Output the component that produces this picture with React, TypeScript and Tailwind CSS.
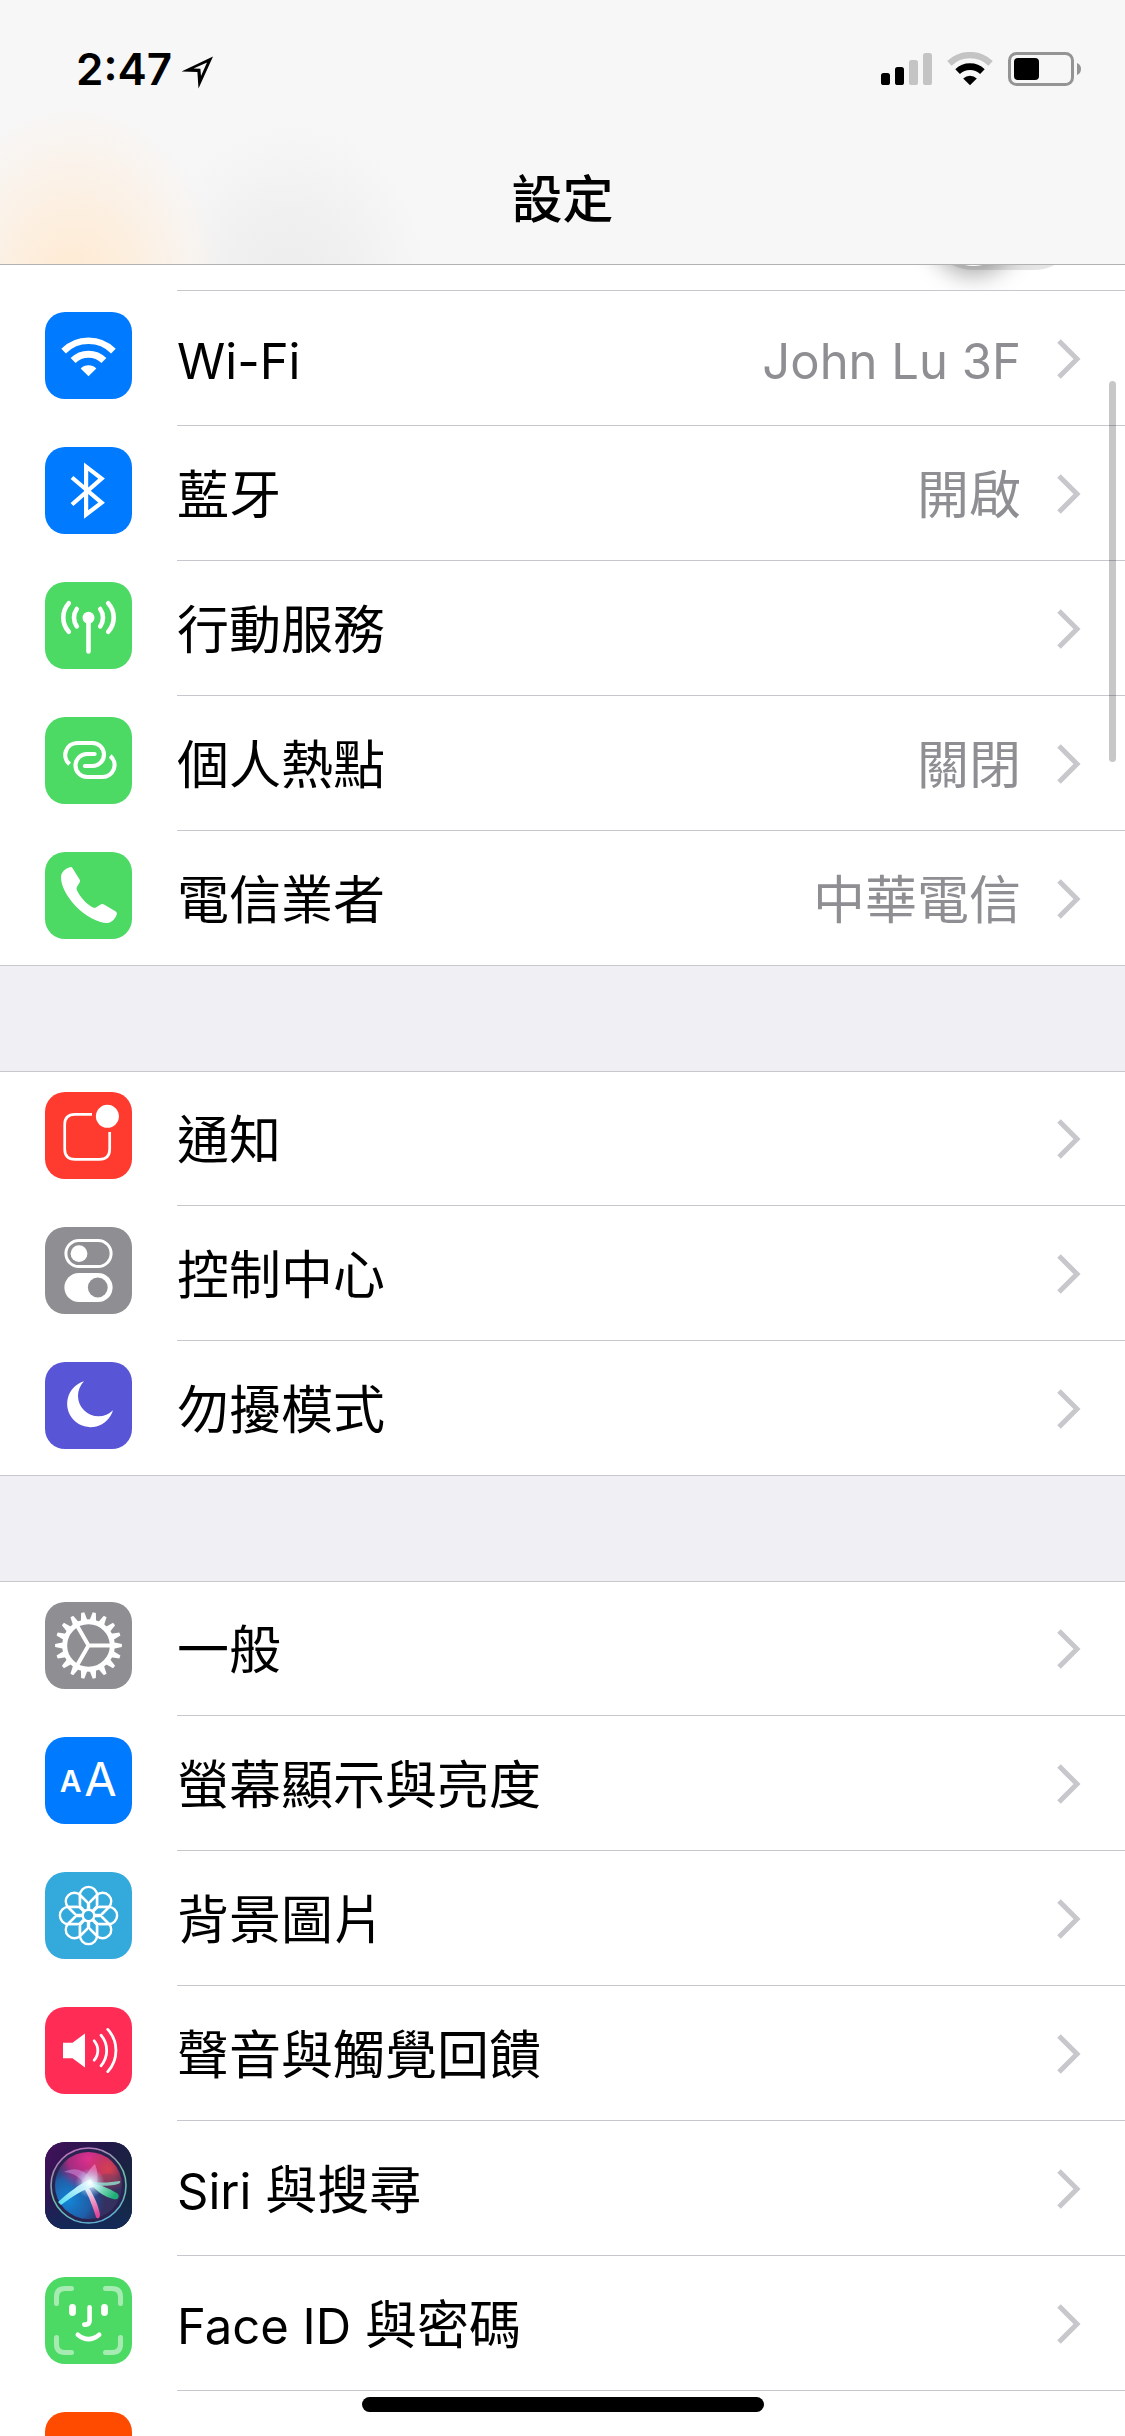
import type { ReactNode } from "react";

function Tile({ color, children }: { color: string; children?: ReactNode }) {
  return (
    <svg viewBox="0 0 87 87" className="size-[87px] rounded-[20px]" fill="none" aria-hidden="true">
      <rect width="87" height="87" fill={color} />
      {children}
    </svg>
  );
}

const WifiIcon = () => (
  <Tile color="#007aff">
    <path d="M18.6 39.1A35.2 35.2 0 0 1 68.4 39.1" stroke="#fff" strokeWidth="6.5" />
    <path d="M28.1 48.6A21.8 21.8 0 0 1 58.9 48.6" stroke="#fff" strokeWidth="7" />
    <path d="M43.5 64.3L35.7 56.4A11 11 0 0 1 51.3 56.4Z" fill="#fff" />
  </Tile>
);

const BluetoothIcon = () => (
  <Tile color="#007aff">
    <path d="M27 30.5L56.6 55.7L41.1 67.5V19.7L56.6 31.5L27 57.5" stroke="#fff" strokeWidth="4.2" />
  </Tile>
);

const CellularIcon = () => (
  <Tile color="#4cd964">
    <circle cx="43.5" cy="35.7" r="6" fill="#fff" />
    <g stroke="#fff" strokeWidth="4.6" strokeLinecap="round">
      <path d="M43.5 38V69.5" />
      <path d="M31.8 27A15 15 0 0 0 31.8 44.4M55.2 27A15 15 0 0 1 55.2 44.4" />
      <path d="M23.8 21.2A21.3 21.3 0 0 0 23.8 49.8M63.2 21.2A21.3 21.3 0 0 1 63.2 49.8" />
    </g>
  </Tile>
);

const HotspotIcon = () => (
  <Tile color="#4cd964">
    <g stroke="#fff" strokeWidth="4.2">
      <path d="M24.6 47.2A12 12 0 0 1 32 26H47.5A11.5 11.5 0 0 1 47.5 49H40" />
      <path d="M65.2 38.8A12 12 0 0 1 57.5 60H42A11.5 11.5 0 0 1 42 37H49.5" />
    </g>
    <path d="M40 49H39.9M49.5 37H49.6" stroke="#fff" strokeWidth="4.2" strokeLinecap="round" />
  </Tile>
);

const PhoneIcon = () => (
  <Tile color="#4cd964">
    <path
      d="M25 15.2Q26.6 14.6 27.6 16.2L34.6 27.4Q35.6 29 34.6 30.5L31.9 35Q31 36.5 31.9 38.2C35.5 45.5 41 51.5 47.5 55.2Q49.5 56.3 51.3 55.2L55.6 52.4Q57.3 51.4 59 52.4L70.8 59.4Q72.6 60.6 71.8 62.6C70 66.8 67.5 70 63 71C56 72 40 64.5 30.5 54C21.5 44 15.8 33.5 16 25C16.3 19.5 20.5 16.6 25 15.2Z"
      fill="#fff"
    />
  </Tile>
);

const NotificationsIcon = () => (
  <Tile color="#ff3b30">
    <path
      d="M47 22.3H30Q19.7 22.3 19.7 32.6V57Q19.7 67.3 30 67.3H54.4Q64.7 67.3 64.7 57V40"
      stroke="#fff"
      strokeWidth="2.7"
    />
    <circle cx="62.4" cy="24.3" r="11.5" fill="#fff" />
  </Tile>
);

const ControlCenterIcon = () => (
  <Tile color="#8e8e93">
    <rect x="20.9" y="13.5" width="45.2" height="26" rx="13" stroke="#fff" strokeWidth="3" />
    <circle cx="34" cy="26.6" r="8.4" fill="#fff" />
    <rect x="19.4" y="46" width="48.2" height="29" rx="14.5" fill="#fff" />
    <circle cx="52.8" cy="60.5" r="9.9" fill="#8e8e93" />
  </Tile>
);

const MoonIcon = () => (
  <Tile color="#5856d6">
    <path d="M39 19.3A20.5 20.5 0 0 0 68 48.3A23.4 23.4 0 1 1 39 19.3Z" fill="#fff" />
  </Tile>
);

const TEETH = Array.from({ length: 18 }, (_, i) => i * 20);
const GearIcon = () => (
  <Tile color="#8e8e93">
    <g transform="translate(43.5 43.5)">
      <circle r="23.8" stroke="#fff" strokeWidth="5" />
      {TEETH.map((a) => (
        <path key={a} d="M25 -3.3L33.4 -1.6V1.6L25 3.3Z" fill="#fff" transform={`rotate(${a})`} />
      ))}
      <path d="M0 0H23M0 0L-11.5 -19.9M0 0L-11.5 19.9" stroke="#fff" strokeWidth="4" />
    </g>
  </Tile>
);

const DisplayIcon = () => (
  <Tile color="#007aff">
    <g fill="#fff" fontFamily="Inter, sans-serif" textAnchor="middle">
      <text x="25.6" y="55" fontSize="30" fontWeight="600">
        A
      </text>
      <text x="55.5" y="59" fontSize="47">
        A
      </text>
    </g>
  </Tile>
);

const PETALS = [0, 45, 90, 135, 180, 225, 270, 315];
const WallpaperIcon = () => (
  <Tile color="#34aadc">
    <g transform="translate(43.5 43.5)" stroke="#fff" strokeWidth="2.4">
      {PETALS.map((a) => (
        <g key={a} transform={`rotate(${a})`}>
          <path d="M-8 -20L0 -12L8 -20M-8.6 -10.5V-20A8.6 8.6 0 0 1 8.6 -20V-10.5" />
          <path d="M0 -5.5V-12" strokeWidth="3.4" />
        </g>
      ))}
      <circle r="5.8" />
    </g>
  </Tile>
);

const SoundIcon = () => (
  <Tile color="#ff2d55">
    <path d="M18 35.7H27.5L40 26.6V60.4L27.5 51.3H18Z" fill="#fff" />
    <g stroke="#fff" strokeWidth="2.8" strokeLinecap="round">
      <path d="M49.2 33.8A14.8 14.8 0 0 1 49.2 53.2" />
      <path d="M56 28.2A23.5 23.5 0 0 1 56 58.8" />
      <path d="M62.8 22.4A31.4 31.4 0 0 1 62.8 64.6" />
    </g>
  </Tile>
);

const SiriIcon = () => (
  <Tile color="#1b1d44">
    <defs>
      <linearGradient id="siri-bg" x1="0" y1="0" x2="1" y2="0.6">
        <stop offset="0" stopColor="#45105c" />
        <stop offset="0.5" stopColor="#23184a" />
        <stop offset="1" stopColor="#15283d" />
      </linearGradient>
      <linearGradient id="siri-base" x1="0" y1="0" x2="0" y2="1">
        <stop offset="0.6" stopColor="#182a60" stopOpacity="0" />
        <stop offset="1" stopColor="#132a58" />
      </linearGradient>
      <radialGradient id="siri-pink" cx="0.5" cy="0.1" r="0.5">
        <stop offset="0" stopColor="#e0308f" />
        <stop offset="0.6" stopColor="#c02a86" stopOpacity="0.8" />
        <stop offset="1" stopColor="#a02a86" stopOpacity="0" />
      </radialGradient>
      <radialGradient id="siri-red" cx="0.8" cy="0.25" r="0.35">
        <stop offset="0" stopColor="#d8404f" />
        <stop offset="1" stopColor="#d8404f" stopOpacity="0" />
      </radialGradient>
      <radialGradient id="siri-blue" cx="0.2" cy="0.72" r="0.55">
        <stop offset="0" stopColor="#1287d8" />
        <stop offset="0.6" stopColor="#1c66b4" stopOpacity="0.85" />
        <stop offset="1" stopColor="#1c4fa4" stopOpacity="0" />
      </radialGradient>
      <radialGradient id="siri-glow">
        <stop offset="0" stopColor="#fff" />
        <stop offset="0.35" stopColor="#d9f6ff" stopOpacity="0.7" />
        <stop offset="1" stopColor="#a9d8ff" stopOpacity="0" />
      </radialGradient>
      <linearGradient id="siri-ring" x1="0.3" y1="0" x2="0.7" y2="1">
        <stop offset="0" stopColor="#c070c0" />
        <stop offset="0.5" stopColor="#6cc0a0" />
        <stop offset="1" stopColor="#5fb0d8" />
      </linearGradient>
      <linearGradient id="siri-green" x1="0" y1="0" x2="1" y2="0.4">
        <stop offset="0" stopColor="#d6fff4" />
        <stop offset="1" stopColor="#1fae78" />
      </linearGradient>
      <linearGradient id="siri-stem" x1="0" y1="0" x2="0.2" y2="1">
        <stop offset="0" stopColor="#fff" />
        <stop offset="1" stopColor="#e0489c" />
      </linearGradient>
      <linearGradient id="siri-cyan" x1="1" y1="0" x2="0" y2="1">
        <stop offset="0" stopColor="#fff" />
        <stop offset="1" stopColor="#52dcf0" />
      </linearGradient>
    </defs>
    <rect width="87" height="87" fill="url(#siri-bg)" />
    <rect width="87" height="87" fill="url(#siri-base)" />
    <circle cx="43.5" cy="43.5" r="37.5" fill="#2a2350" stroke="url(#siri-ring)" strokeWidth="1.6" />
    <circle cx="43.5" cy="43.5" r="33.5" fill="#34305f" />
    <circle cx="43.5" cy="43.5" r="33.5" fill="url(#siri-blue)" />
    <circle cx="43.5" cy="43.5" r="33.5" fill="url(#siri-pink)" />
    <circle cx="43.5" cy="43.5" r="33.5" fill="url(#siri-red)" />
    <path d="M45 42C58 28 70 30 75 40C66 43 55 43 45 42Z" fill="#8a4060" fillOpacity="0.5" />
    <path d="M19 30C30 24 40 28 47 38L42 46C37 36 29 31 19 30Z" fill="#c79be8" fillOpacity="0.5" />
    <path d="M36 41C40 35 44 27 50 22C53 29 53 36 52 43Z" fill="#f08ac8" fillOpacity="0.65" />
    <path d="M46 39C55 42 66 40 75 39C77 42 70 44 48 44Z" fill="#8ff0d8" fillOpacity="0.75" />
    <path d="M46 41C56 43 68 48 73 52C75 56 72 58 68 57C60 55 53 50 46 43Z" fill="url(#siri-green)" />
    <path d="M42 44C47 49 53 62 55 72C55 76 53 78 51 75C48 66 44 54 39 46Z" fill="url(#siri-stem)" />
    <path d="M46 37C34 42 22 52 13 60L16 63C28 54 38 47 49 45Z" fill="url(#siri-cyan)" />
    <circle cx="45" cy="41" r="15" fill="url(#siri-glow)" />
  </Tile>
);

const FaceIdIcon = () => (
  <Tile color="#4cd964">
    <g stroke="#fff" strokeLinecap="round">
      <path
        d="M11.5 26.5V20Q11.5 11.5 20 11.5H26.5M60.5 11.5H67Q75.5 11.5 75.5 20V26.5M75.5 60.5V67Q75.5 75.5 67 75.5H60.5M26.5 75.5H20Q11.5 75.5 11.5 67V60.5"
        strokeOpacity="0.5"
        strokeWidth="5"
      />
      <path d="M27.5 30.5V35.5M59.5 30.5V35.5" strokeWidth="6.8" />
      <path d="M44.6 30.3V43.5Q44.6 47.6 40.5 47.6H39.3" strokeWidth="4.6" />
      <path d="M32.8 57.8Q43.5 66.6 54.2 57.8" strokeWidth="4.6" />
    </g>
  </Tile>
);

const SosIcon = () => <Tile color="#ff4b00" />;

type Item = { label: string; value?: string; icon: ReactNode };

const connectivity: Item[] = [
  { label: "Wi-Fi", value: "John Lu 3F", icon: <WifiIcon /> },
  { label: "藍牙", value: "開啟", icon: <BluetoothIcon /> },
  { label: "行動服務", icon: <CellularIcon /> },
  { label: "個人熱點", value: "關閉", icon: <HotspotIcon /> },
  { label: "電信業者", value: "中華電信", icon: <PhoneIcon /> },
];

const alerts: Item[] = [
  { label: "通知", icon: <NotificationsIcon /> },
  { label: "控制中心", icon: <ControlCenterIcon /> },
  { label: "勿擾模式", icon: <MoonIcon /> },
];

const device: Item[] = [
  { label: "一般", icon: <GearIcon /> },
  { label: "螢幕顯示與亮度", icon: <DisplayIcon /> },
  { label: "背景圖片", icon: <WallpaperIcon /> },
  { label: "聲音與觸覺回饋", icon: <SoundIcon /> },
  { label: "Siri 與搜尋", icon: <SiriIcon /> },
  { label: "Face ID 與密碼", icon: <FaceIdIcon /> },
];

/* Latin runs are set slightly smaller than the Chinese characters beside them. */
function Mixed({ text }: { text: string }) {
  const latin = text.match(/^[\x20-\x7e]*/)?.[0] ?? "";
  return (
    <>
      {latin && <span className="text-[49px] whitespace-pre">{latin}</span>}
      {text.slice(latin.length)}
    </>
  );
}

function Row({ item }: { item: Item }) {
  return (
    <li className="group">
      <a href="#" className="flex h-[135px] pl-[45px]">
        <span className="pt-[21px]">{item.icon}</span>
        <span className="ml-[45px] flex flex-1 items-center border-b border-[#c8c7cc] pr-[44px] group-last:border-transparent">
          <span className="flex-1 pt-1.5">
            <Mixed text={item.label} />
          </span>
          {item.value && (
            <span className="pt-1.5 text-[#8e8e93]">
              <Mixed text={item.value} />
            </span>
          )}
          <svg viewBox="0 0 24 40" className="mt-0.5 ml-[36px] h-10 w-6" fill="none" aria-hidden="true">
            <path d="M2 2L20 20L2 38" stroke="#c7c7cc" strokeWidth="5" />
          </svg>
        </span>
      </a>
    </li>
  );
}

function Group({ items }: { items: Item[] }) {
  return (
    <ul className="relative bg-white before:absolute before:inset-x-0 before:top-0 before:h-px before:bg-[#c8c7cc] after:absolute after:inset-x-0 after:bottom-0 after:h-px after:bg-[#c8c7cc]">
      {items.map((item) => (
        <Row key={item.label} item={item} />
      ))}
    </ul>
  );
}

function StatusBar() {
  return (
    <div className="flex h-[132px] items-start justify-between pt-[52px] pr-[43px] pl-[76px]">
      <div className="flex items-start gap-2.5">
        <time className="text-[44px] leading-[34px] font-semibold">2:47</time>
        <svg viewBox="0 0 32 34" className="mt-1 h-[34px] w-8" aria-label="定位">
          <path
            fillRule="evenodd"
            d="M31 0.5L16.5 32.5L15.4 16L-0.5 15.6ZM25 6.4L11.5 12.4L18.4 12.7L19 20Z"
          />
        </svg>
      </div>
      <div className="flex items-center gap-[15px]">
        <svg viewBox="0 0 51 34" className="h-[34px] w-[51px]" aria-label="訊號強度">
          <rect x="0" y="21" width="9" height="12" rx="2.6" />
          <rect x="14" y="15" width="9" height="18" rx="2.6" />
          <rect x="28" y="8" width="9" height="25" rx="2.6" fill="#c4c4c4" />
          <rect x="42" y="1" width="9" height="32" rx="2.6" fill="#c4c4c4" />
        </svg>
        <svg viewBox="0 0 46 34" className="h-[34px] w-[46px]" fill="none" aria-label="Wi-Fi">
          <path d="M2.4 11.3A30 30 0 0 1 43.6 11.3" stroke="#c4c4c4" strokeWidth="6.4" />
          <path d="M10.6 19.7A17.8 17.8 0 0 1 35.4 19.7" stroke="#000" strokeWidth="6.6" />
          <path d="M23 33.3L16.2 26.4A9.8 9.8 0 0 1 29.8 26.4Z" fill="#000" />
        </svg>
        <svg viewBox="0 0 74 34" className="h-[34px] w-[74px]" fill="none" aria-label="電池">
          <rect x="1.5" y="1.5" width="63" height="31" rx="7" stroke="#949494" strokeWidth="3" />
          <rect x="6" y="6" width="25" height="22" rx="4" fill="#000" />
          <path d="M69 11V23Q73 21.5 73 17Q73 12.5 69 11Z" fill="#949494" />
        </svg>
      </div>
    </div>
  );
}

export default function App() {
  return (
    <div className="relative flex h-screen flex-col overflow-hidden bg-[#efeff4] font-['Inter','Noto_Sans_CJK_TC',sans-serif] text-[52px] leading-[72px] text-black">
      <header className="z-10 h-[265px] shrink-0 border-b border-[#b2b2b2] bg-[#f7f7f8] bg-[radial-gradient(150px_190px_at_75px_290px,#ffe9d0_0%,#fdeedd_35%,#faf3ec_70%,#f7f7f800_100%),radial-gradient(140px_170px_at_290px_290px,#ececec_0%,#f0f0f0_45%,#f4f4f5_75%,#f7f7f800_100%)]">
        <StatusBar />
        <h1 className="flex h-[132px] items-center justify-center pt-[3px] text-[51px] font-medium">設定</h1>
      </header>

      <main className="min-h-0 flex-1 overflow-hidden">
        <div className="flex h-[26px] flex-col items-end justify-end overflow-hidden bg-white pl-[177px]">
          <button
            role="switch"
            aria-checked="false"
            aria-label="飛航模式"
            className="mr-[45px] mb-[20px] h-[93px] w-[153px] shrink-0 rounded-full border-4 border-[#e5e5e5] bg-[#e5e5e5]"
          >
            <span className="block size-[85px] rounded-full bg-white shadow-[0_9px_24px_rgba(0,0,0,0.35)]" />
          </button>
          <div className="h-px w-full shrink-0 bg-[#c8c7cc]" />
        </div>
        <ul className="relative bg-white after:absolute after:inset-x-0 after:bottom-0 after:h-px after:bg-[#c8c7cc]">
          {connectivity.map((item) => (
            <Row key={item.label} item={item} />
          ))}
        </ul>
        <div className="mt-[105px]">
          <Group items={alerts} />
        </div>
        <ul className="relative mt-[105px] bg-white before:absolute before:inset-x-0 before:top-0 before:h-px before:bg-[#c8c7cc]">
          {device.map((item) => (
            <Row key={item.label} item={item} />
          ))}
          <li className="h-[135px] pt-[21px] pl-[45px]">
            <a href="#" aria-label="SOS 緊急服務">
              <SosIcon />
            </a>
          </li>
        </ul>
      </main>

      <div className="absolute top-[381px] right-[9px] h-[381px] w-[7px] rounded-full bg-black/22" />
      <div className="absolute bottom-6 left-1/2 h-[15px] w-[402px] -translate-x-1/2 rounded-full bg-black" />
    </div>
  );
}
